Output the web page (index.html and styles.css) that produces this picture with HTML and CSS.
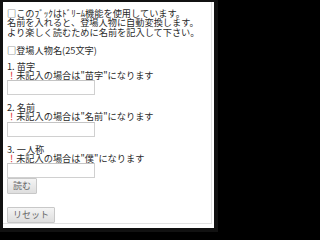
FILE: index.html
```html
<!DOCTYPE html>
<html lang="ja">
<head>
<meta charset="utf-8">
<title>ドリーム設定</title>
<link rel="stylesheet" href="styles.css">
</head>
<body>
<div class="frame">
  <div class="page">
    <p class="intro">□このﾌﾞｯｸはﾄﾞﾘｰﾑ機能を使用しています。<br>名前を入れると、登場人物に自動変換します。<br>より楽しく読むために名前を記入して下さい。</p>
    <p class="heading">□登場人物名(25文字)</p>
    <form class="form">
      <div class="field">
        <span class="label">1. 苗字</span>
        <span class="note"><span class="mark">！</span>未記入の場合は"苗字"になります</span>
        <input class="box" type="text">
      </div>
      <div class="field">
        <span class="label">2. 名前</span>
        <span class="note"><span class="mark">！</span>未記入の場合は"名前"になります</span>
        <input class="box" type="text">
      </div>
      <div class="field">
        <span class="label">3. 一人称</span>
        <span class="note"><span class="mark">！</span>未記入の場合は"僕"になります</span>
        <input class="box" type="text">
        <button class="btn" type="button">読む</button>
      </div>
      <button class="btn" type="reset">リセット</button>
    </form>
  </div>
</div>
</body>
</html>
```
FILE: styles.css
```css
html, body {
  margin: 0;
  padding: 0;
  background: #000;
}
.frame {
  box-sizing: border-box;
  width: 218px;
  height: 232px;
  border-style: solid;
  border-color: #111;
  border-width: 2px 4px 4px 3px;
  background: #fff;
  overflow: hidden;
}
.page {
  box-sizing: border-box;
  height: 222px;
  margin-right: 2px;
  padding: 7.2px 0 0 4px;
  font-family: "Noto Sans CJK JP", "Noto Sans", sans-serif;
  font-size: 9.2px;
  line-height: 9.3px;
  color: #2a2a2a;
  border-right: 1px solid #e2e2e2;
  border-bottom: 1px solid #e2e2e2;
}
.intro, .heading {
  margin: 0;
}
.heading {
  margin-top: 9.3px;
}
.form {
  display: flex;
  flex-direction: column;
  align-items: flex-start;
  gap: 8.4px;
  margin-top: 6px;
}
.field {
  display: flex;
  flex-direction: column;
  align-items: flex-start;
}
.note {
  margin-top: -0.3px;
}
.mark {
  color: #e23a3a;
}
.box {
  box-sizing: border-box;
  width: 88px;
  height: 15px;
  margin: 0;
  padding: 0 2px;
  border: 1px solid #d0d0d0;
  border-top-color: #c4c4c4;
  background: #fff;
  font: inherit;
}
.btn {
  box-sizing: border-box;
  height: 16px;
  margin: 0;
  padding: 0 5px;
  border: 1px solid #c8c8c8;
  border-radius: 1px;
  background: linear-gradient(#f4f4f4, #dedede);
  color: #666;
  font-family: "Noto Sans CJK JP", sans-serif;
  font-size: 9px;
  line-height: 14px;
}
.form > .btn {
  margin-top: 3.8px;
}
```
